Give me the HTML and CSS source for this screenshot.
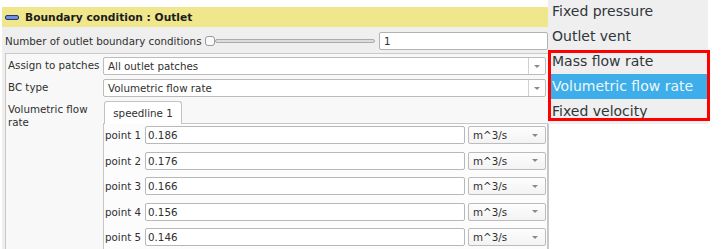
FILE: index.html
```html
<!DOCTYPE html>
<html>
<head>
    <title>Boundary condition : Outlet</title>
    <link rel="stylesheet" href="styles.css">
</head>
<body>
    <div class="screen">
        <div class="panel">
            <div class="section-head">
                <svg class="collapse-icon" width="14" height="5" viewBox="0 0 14 5">
                    <rect x="0.5" y="0.5" width="13" height="4" rx="1.5" fill="#6f8fdc" stroke="#25367a"/>
                </svg>
                <span>Boundary condition : Outlet</span>
            </div>

            <div class="count-row">
                <span class="count-label">Number of outlet boundary conditions</span>
                <div class="slider">
                    <span class="slider-thumb"></span>
                    <span class="slider-track"></span>
                </div>
                <div class="spinbox">1</div>
            </div>

            <div class="form-frame">
                <div class="form-label">Assign to patches</div>
                <div class="combo combo-split">
                    <span class="combo-text">All outlet patches</span>
                    <span class="combo-button"><span class="arrow"></span></span>
                </div>

                <div class="form-label">BC type</div>
                <div class="combo combo-split">
                    <span class="combo-text">Volumetric flow rate</span>
                    <span class="combo-button"><span class="arrow"></span></span>
                </div>

                <div class="form-label">Volumetric flow rate</div>
                <div class="tabs">
                    <div class="tab-bar">
                        <div class="tab">speedline 1</div>
                    </div>
                    <div class="tab-pane">
                        <div class="point-row">
                            <span class="point-label">point 1</span>
                            <div class="text-input">0.186</div>
                            <div class="combo unit-combo"><span class="combo-text">m^3/s</span><span class="arrow"></span></div>
                        </div>
                        <div class="point-row">
                            <span class="point-label">point 2</span>
                            <div class="text-input">0.176</div>
                            <div class="combo unit-combo"><span class="combo-text">m^3/s</span><span class="arrow"></span></div>
                        </div>
                        <div class="point-row">
                            <span class="point-label">point 3</span>
                            <div class="text-input">0.166</div>
                            <div class="combo unit-combo"><span class="combo-text">m^3/s</span><span class="arrow"></span></div>
                        </div>
                        <div class="point-row">
                            <span class="point-label">point 4</span>
                            <div class="text-input">0.156</div>
                            <div class="combo unit-combo"><span class="combo-text">m^3/s</span><span class="arrow"></span></div>
                        </div>
                        <div class="point-row">
                            <span class="point-label">point 5</span>
                            <div class="text-input">0.146</div>
                            <div class="combo unit-combo"><span class="combo-text">m^3/s</span><span class="arrow"></span></div>
                        </div>
                    </div>
                </div>
            </div>
        </div>

        <!-- open dropdown of the BC type combo -->
        <ul class="popup-menu">
            <li>Fixed pressure</li>
            <li>Outlet vent</li>
            <li>Mass flow rate</li>
            <li class="selected">Volumetric flow rate</li>
            <li>Fixed velocity</li>
        </ul>
        <div class="mark-box"></div>
    </div>
</body>
</html>
```

FILE: styles.css
```css
body {
    margin: 0;
    background-color: #fff;
    font-family: "DejaVu Sans", sans-serif;
    font-size: 10.3px;
    color: #2f2f2f;
}
.screen {
    position: relative;
    width: 725px;
    height: 249px;
    padding-top: 7px;
    box-sizing: border-box;
    overflow: hidden;
}
.panel {
    margin-left: 2px;
    width: 547px;
    height: 242px;
    background-color: #efefef;
    display: flex;
    flex-direction: column;
}
.section-head {
    height: 20px;
    flex: none;
    display: flex;
    align-items: center;
    gap: 6px;
    padding-left: 3px;
    background-color: #f0e68c;
    font-weight: bold;
    font-size: 10.7px;
    color: #1c1c1c;
}
.collapse-icon {
    display: block;
}
.count-row {
    height: 26px;
    flex: none;
    display: flex;
    align-items: center;
    padding: 1px 1px 0 3px;
    box-sizing: border-box;
}
.count-label {
    width: 200px;
    flex: none;
    white-space: nowrap;
}
.slider {
    width: 170px;
    display: flex;
    align-items: center;
}
.slider-thumb {
    width: 10px;
    height: 10px;
    box-sizing: border-box;
    border: 1px solid #9a9a9a;
    border-radius: 3px;
    background-color: #fafafa;
}
.slider-track {
    flex: 1;
    height: 2px;
    border: 1px solid #ababab;
    border-radius: 2px;
    background-color: #dcdcdc;
}
.spinbox {
    flex: 1;
    margin-left: 4px;
    height: 18px;
    box-sizing: border-box;
    border: 1px solid #b3b3b3;
    border-radius: 2px;
    background-color: #fff;
    padding-left: 4px;
    display: flex;
    align-items: center;
}
.form-frame {
    flex: 1;
    margin-left: 3px;
    border: 1px solid #c9c9c9;
    border-bottom: none;
    background-color: #f8f8f8;
    display: grid;
    grid-template-columns: 95px 1fr;
    grid-template-rows: 18px 18px 1fr;
    row-gap: 4px;
    align-content: start;
    padding: 3px 0 0 2px;
}
.form-label {
    padding-top: 2px;
    line-height: 13px;
}
.combo {
    height: 18px;
    box-sizing: border-box;
    border: 1px solid #bcbcbc;
    border-radius: 2px;
    background: linear-gradient(#fdfdfd, #f3f3f3);
    display: flex;
    align-items: center;
}
.combo-split {
    margin-right: 2px;
    background: #fff;
}
.combo-text {
    flex: 1;
    padding-left: 4px;
    white-space: nowrap;
}
.combo-button {
    width: 16px;
    align-self: stretch;
    border-left: 1px solid #d0d0d0;
    display: flex;
    align-items: center;
    justify-content: center;
}
.arrow {
    width: 0;
    height: 0;
    border-left: 3px solid transparent;
    border-right: 3px solid transparent;
    border-top: 3px solid #8a8a8a;
}
.unit-combo .arrow {
    margin-right: 7px;
}
.tabs {
    display: flex;
    flex-direction: column;
}
.tab-bar {
    height: 22px;
    display: flex;
    align-items: flex-end;
}
.tab {
    position: relative;
    margin-left: 1px;
    margin-bottom: -1px;
    width: 78px;
    height: 23px;
    box-sizing: border-box;
    border: 1px solid #c2c2c2;
    border-bottom: none;
    border-radius: 3px 3px 0 0;
    background-color: #fff;
    display: flex;
    align-items: center;
    justify-content: center;
}
.tab-pane {
    flex: 1;
    border: 1px solid #c6c6c6;
    border-bottom: none;
    background-color: #fcfcfc;
    padding: 2px 1px 0 1px;
    display: flex;
    flex-direction: column;
    gap: 7.6px;
}
.point-row {
    height: 18px;
    display: flex;
    align-items: center;
}
.point-label {
    width: 40px;
    flex: none;
}
.text-input {
    flex: 1;
    height: 18px;
    box-sizing: border-box;
    border: 1px solid #b8b8b8;
    border-radius: 2px;
    background-color: #fff;
    padding-left: 2px;
    display: flex;
    align-items: center;
}
.unit-combo {
    width: 78px;
    flex: none;
    margin-left: 3px;
}
.popup-menu {
    position: absolute;
    left: 548px;
    top: -1px;
    width: 160px;
    margin: 0;
    padding: 0;
    list-style: none;
    background-color: #efefef;
    font-size: 14px;
    color: #31363b;
}
.popup-menu li {
    height: 25px;
    line-height: 25px;
    padding-left: 4px;
    white-space: nowrap;
}
.popup-menu li.selected {
    background-color: #3daee9;
    color: #eef6fb;
}
.mark-box {
    position: absolute;
    left: 548px;
    top: 50px;
    width: 162px;
    height: 71px;
    box-sizing: border-box;
    border: 3px solid #ff0000;
}
```
